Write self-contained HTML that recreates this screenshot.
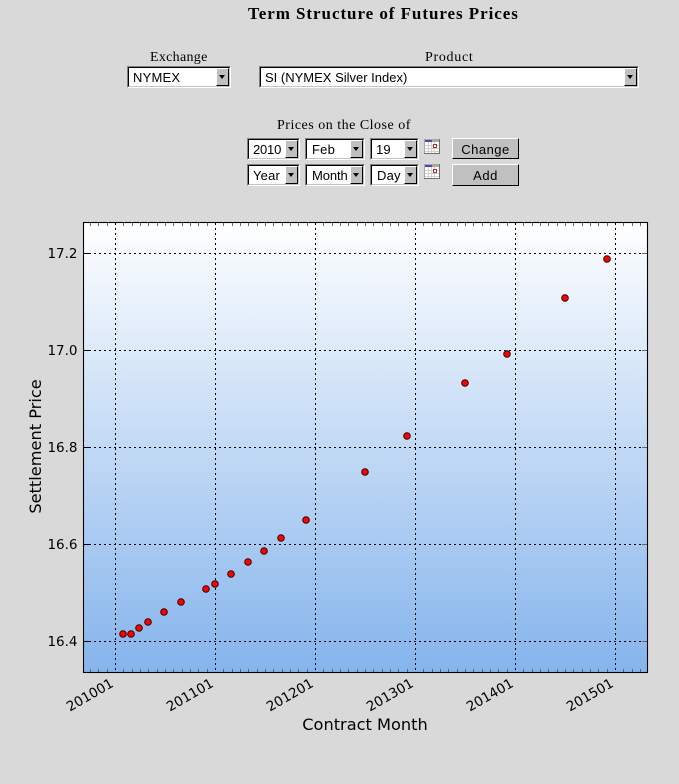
<!DOCTYPE html>
<html><head><meta charset="utf-8"><style>
html,body{margin:0;padding:0;width:679px;height:784px;overflow:hidden;background:#d9d9d9}
body{position:relative;font-family:"Liberation Sans",sans-serif}
.l{position:absolute;font-family:"Liberation Serif",serif;font-size:14px;line-height:16px;color:#000;white-space:nowrap}
.s{position:absolute;box-sizing:border-box;border:1px solid;border-color:#808080 #fff #fff #808080;background:#fff}
.s i{position:absolute;left:0;top:0;right:0;bottom:0;border:1px solid;border-color:#000 #c4c4c4 #c4c4c4 #000}
.s span{position:absolute;left:5px;top:2px;font-size:13px;line-height:17px;color:#000;white-space:nowrap;letter-spacing:.2px}
.s b{position:absolute;right:1px;top:1px;bottom:1px;width:13px;box-sizing:border-box;background:#c0c0c0;border:1px solid;border-color:#fff #000 #000 #fff}
.s b:after{content:"";position:absolute;left:2px;top:6px;border:3.5px solid transparent;border-top:4px solid #000;border-bottom:0}
.b{position:absolute;left:452px;width:67px;box-sizing:border-box;background:#c0c0c0;border:1px solid;border-color:#fff #000 #000 #fff;text-align:center;font-size:13px;letter-spacing:.5px;color:#000}
</style></head><body>
<div class="l" style="left:248px;top:4px;font-size:17px;line-height:20px;font-weight:bold;letter-spacing:.95px">Term Structure of Futures Prices</div>
<div class="l" style="left:150px;top:50px;letter-spacing:.3px">Exchange</div>
<div class="l" style="left:425px;top:50px;letter-spacing:.7px">Product</div>
<div class="s" style="left:127px;top:66px;width:104px;height:22px"><i></i><span>NYMEX</span><b></b></div>
<div class="s" style="left:259px;top:66px;width:380px;height:22px"><i></i><span style="letter-spacing:0">SI (NYMEX Silver Index)</span><b></b></div>
<div class="l" style="left:277px;top:118px;letter-spacing:.5px">Prices on the Close of</div>

<div class="s" style="left:247px;top:138px;width:53px;height:22px"><i></i><span style="letter-spacing:-.2px">2010</span><b></b></div>
<div class="s" style="left:305px;top:138px;width:60px;height:22px"><i></i><span style="left:6px">Feb</span><b></b></div>
<div class="s" style="left:370px;top:138px;width:49px;height:22px"><i></i><span style="left:5px">19</span><b></b></div>
<div class="s" style="left:247px;top:164px;width:53px;height:22px"><i></i><span>Year</span><b></b></div>
<div class="s" style="left:305px;top:164px;width:60px;height:22px"><i></i><span style="left:6px;letter-spacing:-.1px">Month</span><b></b></div>
<div class="s" style="left:370px;top:164px;width:49px;height:22px"><i></i><span style="left:6px">Day</span><b></b></div>

<svg style="position:absolute;left:424px;top:139px" width="16" height="15"><rect width="16" height="15" fill="#a8a8a8"/><rect x="1" y="3" width="14" height="11" fill="#fff"/><rect x="1" y="1" width="7" height="2" fill="#4a4ab0"/><path d="M1 6.5H15M1 9.5H15M1 12.5H15M4.5 3V14M7.5 3V14M10.5 3V14" stroke="#d0d0d0" fill="none"/><rect x="9.5" y="5.5" width="3" height="3" fill="#fff" stroke="#b03030"/><path d="M0 14.5H16M15.5 0V15" stroke="#707070" fill="none"/></svg>
<svg style="position:absolute;left:424px;top:164px" width="16" height="15"><rect width="16" height="15" fill="#a8a8a8"/><rect x="1" y="3" width="14" height="11" fill="#fff"/><rect x="1" y="1" width="7" height="2" fill="#4a4ab0"/><path d="M1 6.5H15M1 9.5H15M1 12.5H15M4.5 3V14M7.5 3V14M10.5 3V14" stroke="#d0d0d0" fill="none"/><rect x="9.5" y="5.5" width="3" height="3" fill="#fff" stroke="#b03030"/><path d="M0 14.5H16M15.5 0V15" stroke="#707070" fill="none"/></svg>

<div class="b" style="top:138px;height:21px;line-height:21px">Change</div>
<div class="b" style="top:164px;height:22px;line-height:21px">Add</div>

<svg style="position:absolute;left:0;top:200px" width="679" height="584" viewBox="0 200 679 584" font-family="DejaVu Sans, sans-serif">
<defs><linearGradient id="g" x1="0" y1="0" x2="0" y2="1"><stop offset="0" stop-color="#fff"/><stop offset="1" stop-color="#85b4ec"/></linearGradient></defs>
<rect x="83.5" y="222.5" width="564" height="450" fill="url(#g)"/>
<g stroke="#000" stroke-width="1" fill="none">
<path shape-rendering="crispEdges" stroke-dasharray="2 3" d="M84 253.5H647M84 350.5H647M84 447.5H647M84 544.5H647M84 641.5H647"/>
<path shape-rendering="crispEdges" stroke-dasharray="2 3" d="M115.5 223V672M215.5 223V672M315.5 223V672M415.5 223V672M515.5 223V672M615.5 223V672"/>
<g stroke="#666">
<path d="M90.5 672v-3M98.5 672v-3M107.5 672v-3M123.5 672v-3M132.5 672v-3M140.5 672v-3M148.5 672v-3M157.5 672v-3M165.5 672v-3M173.5 672v-3M182.5 672v-3M190.5 672v-3M198.5 672v-3M207.5 672v-3M223.5 672v-3M232.5 672v-3M240.5 672v-3M248.5 672v-3M257.5 672v-3M265.5 672v-3M273.5 672v-3M282.5 672v-3M290.5 672v-3M298.5 672v-3M307.5 672v-3M323.5 672v-3M332.5 672v-3M340.5 672v-3M348.5 672v-3M357.5 672v-3M365.5 672v-3M373.5 672v-3M382.5 672v-3M390.5 672v-3M398.5 672v-3M407.5 672v-3M423.5 672v-3M432.5 672v-3M440.5 672v-3M448.5 672v-3M457.5 672v-3M465.5 672v-3M473.5 672v-3M482.5 672v-3M490.5 672v-3M498.5 672v-3M507.5 672v-3M523.5 672v-3M532.5 672v-3M540.5 672v-3M548.5 672v-3M557.5 672v-3M565.5 672v-3M573.5 672v-3M582.5 672v-3M590.5 672v-3M598.5 672v-3M607.5 672v-3M623.5 672v-3M632.5 672v-3M640.5 672v-3"/>
<path d="M90.5 223v3M98.5 223v3M107.5 223v3M123.5 223v3M132.5 223v3M140.5 223v3M148.5 223v3M157.5 223v3M165.5 223v3M173.5 223v3M182.5 223v3M190.5 223v3M198.5 223v3M207.5 223v3M223.5 223v3M232.5 223v3M240.5 223v3M248.5 223v3M257.5 223v3M265.5 223v3M273.5 223v3M282.5 223v3M290.5 223v3M298.5 223v3M307.5 223v3M323.5 223v3M332.5 223v3M340.5 223v3M348.5 223v3M357.5 223v3M365.5 223v3M373.5 223v3M382.5 223v3M390.5 223v3M398.5 223v3M407.5 223v3M423.5 223v3M432.5 223v3M440.5 223v3M448.5 223v3M457.5 223v3M465.5 223v3M473.5 223v3M482.5 223v3M490.5 223v3M498.5 223v3M507.5 223v3M523.5 223v3M532.5 223v3M540.5 223v3M548.5 223v3M557.5 223v3M565.5 223v3M573.5 223v3M582.5 223v3M590.5 223v3M598.5 223v3M607.5 223v3M623.5 223v3M632.5 223v3M640.5 223v3"/>
<path d="M642 253.5h5M642 350.5h5M642 447.5h5M642 544.5h5M642 641.5h5"/>
</g>
<path d="M84 253.5h5M84 350.5h5M84 447.5h5M84 544.5h5M84 641.5h5"/>
<rect x="83.5" y="222.5" width="564" height="450" stroke-width="1.1"/>
</g>
<g fill="#f00" stroke="#300" stroke-width="1">
<circle cx="123" cy="634" r="3.3"/><circle cx="131" cy="634" r="3.3"/><circle cx="139" cy="628" r="3.3"/><circle cx="148" cy="622" r="3.3"/><circle cx="164" cy="612" r="3.3"/><circle cx="181" cy="602" r="3.3"/><circle cx="206" cy="589" r="3.3"/><circle cx="215" cy="584" r="3.3"/><circle cx="231" cy="574" r="3.3"/><circle cx="248" cy="562" r="3.3"/><circle cx="264" cy="551" r="3.3"/><circle cx="281" cy="538" r="3.3"/><circle cx="306" cy="520" r="3.3"/><circle cx="365" cy="472" r="3.3"/><circle cx="407" cy="436" r="3.3"/><circle cx="465" cy="383" r="3.3"/><circle cx="507" cy="354" r="3.3"/><circle cx="565" cy="298" r="3.3"/><circle cx="607" cy="259" r="3.3"/>
</g>
<g font-size="13.5" fill="#000" text-anchor="end">
<text x="77.5" y="258">17.2</text><text x="77.5" y="355">17.0</text><text x="77.5" y="452">16.8</text><text x="77.5" y="549">16.6</text><text x="77.5" y="646">16.4</text>
</g>
<g font-size="13.5" fill="#000" text-anchor="end">
<text transform="translate(114.5 686) rotate(-30)">201001</text>
<text transform="translate(214.5 686) rotate(-30)">201101</text>
<text transform="translate(314.5 686) rotate(-30)">201201</text>
<text transform="translate(414.5 686) rotate(-30)">201301</text>
<text transform="translate(514.5 686) rotate(-30)">201401</text>
<text transform="translate(614.5 686) rotate(-30)">201501</text>
</g>
<text x="365" y="730" font-size="16.2" text-anchor="middle" fill="#000">Contract Month</text>
<text transform="translate(41 446.5) rotate(-90)" font-size="16.2" text-anchor="middle" fill="#000">Settlement Price</text>
</svg>
</body></html>
